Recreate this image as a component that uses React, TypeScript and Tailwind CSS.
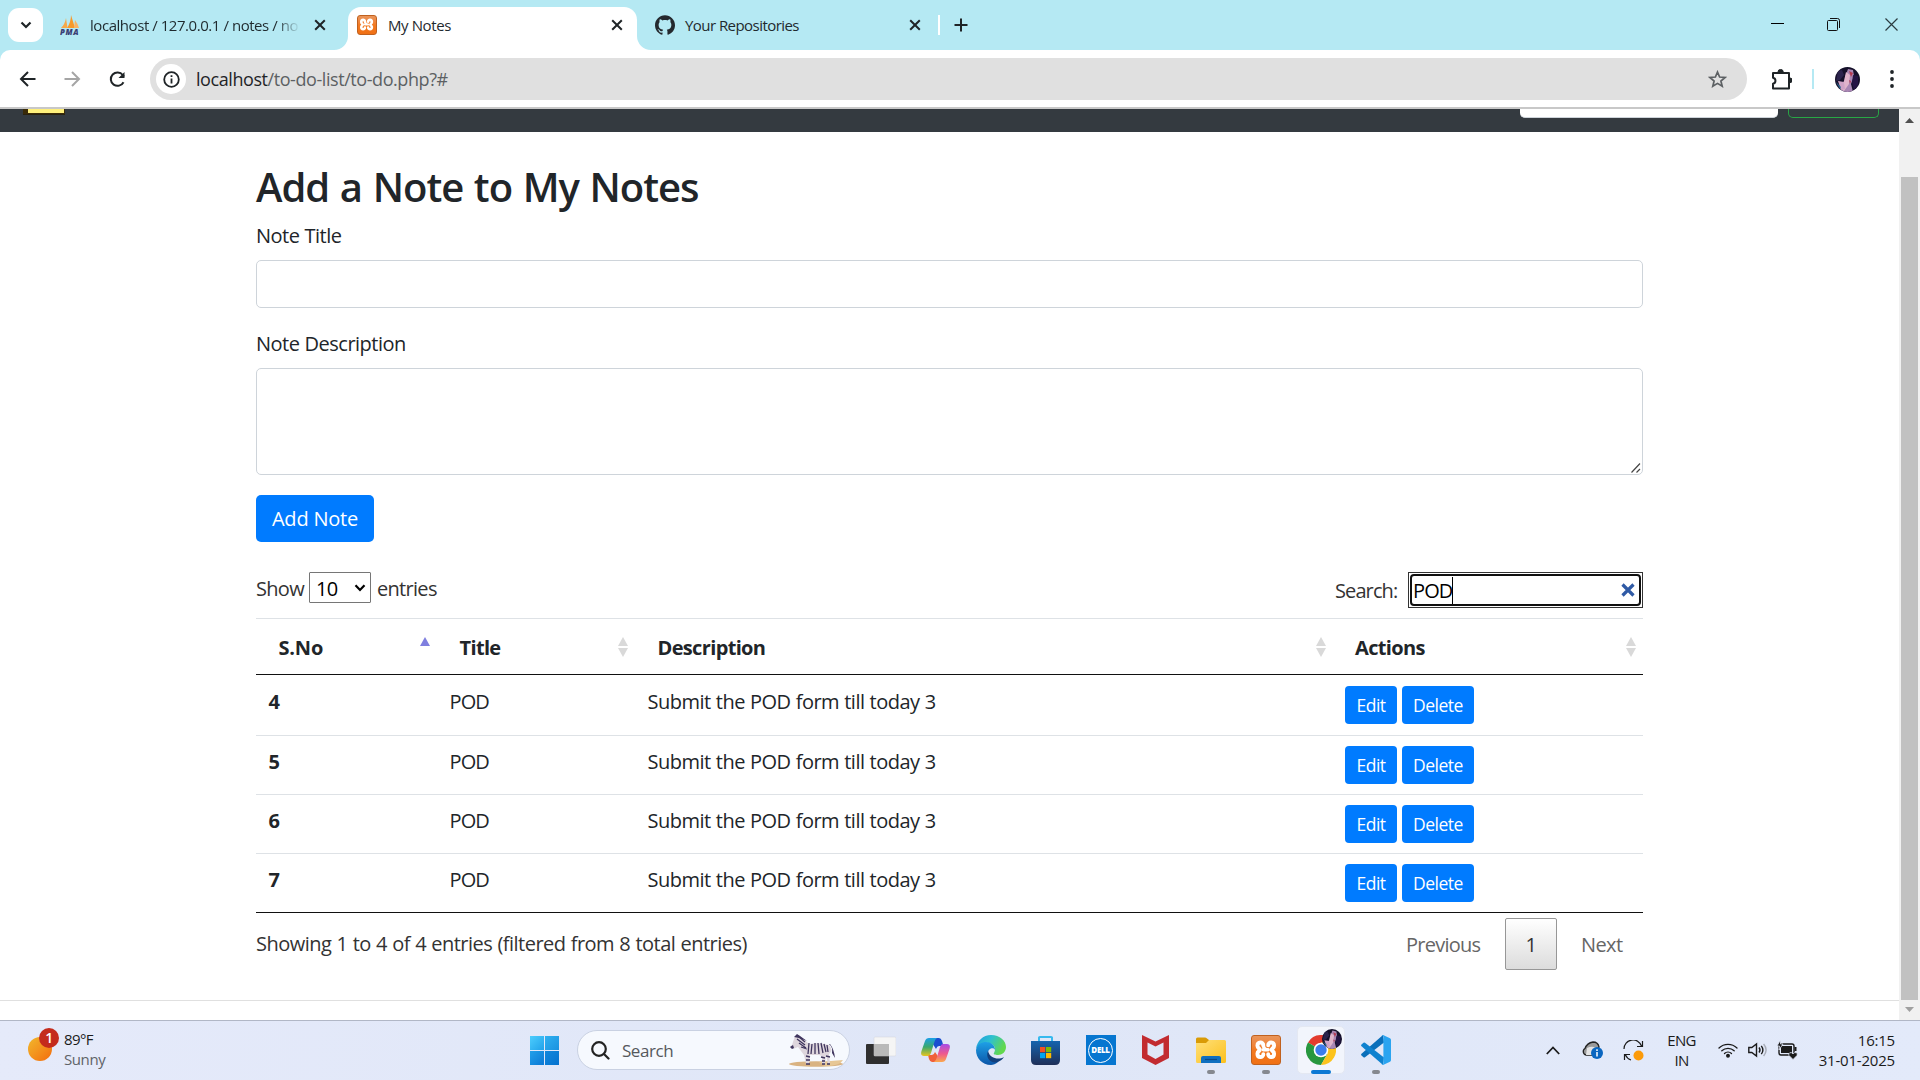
import React from 'react';
import { SiGithub } from 'react-icons/si';

const notes = [
  { id: 4, title: 'POD', text: 'Submit the POD form till today 3', height: 'h-[61px]', pad: 'pt-[11px]' },
  { id: 5, title: 'POD', text: 'Submit the POD form till today 3', height: 'h-[59px]', pad: 'pt-[10px]' },
  { id: 6, title: 'POD', text: 'Submit the POD form till today 3', height: 'h-[59px]', pad: 'pt-[10px]' },
  { id: 7, title: 'POD', text: 'Submit the POD form till today 3', height: 'h-[58px]', pad: 'pt-[10px]' },
];

const columns = 'grid grid-cols-[181px_198px_697.5px_310.5px]';

function CloseX({ className = '' }: { className?: string }) {
  return (
    <svg className={`size-[12px] shrink-0 ${className}`} viewBox="0 0 12 12" fill="none" stroke="#1f2427" strokeWidth="2">
      <path d="M1.2 1.2l9.6 9.6M10.8 1.2l-9.6 9.6" />
    </svg>
  );
}

function Xampp({ className = '' }: { className?: string }) {
  return (
    <span className={`flex shrink-0 items-center justify-center rounded-[3px] border border-[#c0611f] bg-linear-to-b from-[#e9955a] via-[#f37a20] to-[#f07014] ${className}`}>
      <svg className="size-[84%]" viewBox="0 0 24 24" fill="none" stroke="#fff" strokeWidth="4" strokeLinecap="round" strokeLinejoin="round">
        <path d="M9.500 7.500C9.500 3.500 3.500 3.500 3.500 8c0 2.500 2.500 2.500 2.500 4s-2.500 1.500-2.500 4c0 4.500 6 4.500 6 .5" />
        <path d="M14.500 7.500C14.500 3.500 20.500 3.500 20.500 8c0 2.500-2.500 2.500-2.500 4s2.500 1.500 2.500 4c0 4.500-6 4.500-6 .5" />
        <path d="M9.500 7.500Q10 12 14.500 12M9.500 12h5" strokeWidth="3.400" />
      </svg>
    </span>
  );
}

function Avatar({ className = '' }: { className?: string }) {
  return (
    <svg className={`shrink-0 rounded-full ${className}`} viewBox="0 0 25 25">
      <rect width="25" height="25" fill="#15102a" />
      <path d="M3 4l4-1 2 5-4 5-4 1z" fill="#2b234c" />
      <path d="M13 2l5 1 1 6-3 8 2 8H6l3-7 1-8z" fill="#a987b4" />
      <path d="M11 5l4 3-1 9-5 7-4-3 4-7z" fill="#e0b4cb" />
      <path d="M3 14l6 1 1 7-4 1z" fill="#cfa3c6" />
      <path d="M14 4l4 2-2 4zM14 13l2 1-1 3z" fill="#b43a52" />
      <path d="M1 15l5 5-1 2z" fill="#2a6a94" />
      <path d="M18 8l5 1v9l-4 5-2-7z" fill="#241444" />
    </svg>
  );
}

function TabStrip() {
  return (
    <div className="flex h-[50px] shrink-0 bg-[#b5e9f3] text-[15px] tracking-[-0.45px] text-[#1f2a2e]">
      <div className="ml-[8px] mt-[8px] flex h-[34px] w-[35px] items-center justify-center rounded-[11px] bg-white">
        <svg className="size-[12px]" viewBox="0 0 12 12" fill="none" stroke="#1f2427" strokeWidth="2.2">
          <path d="M1.500 3.500L6 8l4.500-4.500" />
        </svg>
      </div>
      <div className="flex h-[50px] w-[305px] items-center pl-[17px]">
        <svg className="size-[20px] shrink-0" viewBox="0 0 20 20">
          <path d="M1 13Q5 9 6 3l1.500 10z" fill="#f6a94a" />
          <path d="M7 13Q11 7 11 0l4 13z" fill="#f8992a" />
          <path d="M14 13l1-8q3 4 4 8z" fill="#f9b465" />
          <text x="0" y="19.500" fontFamily="Open Sans" fontSize="7.800" fontWeight="800" fontStyle="italic" fill="#3b3e73" letterSpacing="0.600">PMA</text>
        </svg>
        <span className="ml-[10px] w-[210px] whitespace-nowrap mask-r-from-[186px] mask-r-to-[210px]">
          localhost / 127.0.0.1 / notes / no
        </span>
        <CloseX className="ml-[14px]" />
      </div>
      <div className="relative mt-[7px] flex h-[43px] w-[289px] items-center rounded-t-[13px] bg-white pb-[7px] pl-[9px]">
        <svg className="absolute bottom-0 -left-[14px] size-[14px]" viewBox="0 0 14 14"><path d="M14 0v14H0A14 14 0 0 0 14 0z" fill="#fff" /></svg>
        <svg className="absolute -right-[14px] bottom-0 size-[14px]" viewBox="0 0 14 14"><path d="M0 0v14h14A14 14 0 0 1 0 0z" fill="#fff" /></svg>
        <Xampp className="size-[20px]" />
        <span className="ml-[11px] w-[223px] tracking-[-0.4px]">My Notes</span>
        <CloseX />
      </div>
      <div className="flex h-[50px] items-center pl-[18px]">
        <SiGithub className="size-[20px] text-[#24292e]" />
        <span className="ml-[10px] w-[224px] tracking-[-0.55px]">Your Repositories</span>
        <CloseX />
        <span className="ml-[17px] h-[20px] w-[2px] bg-white" />
        <svg className="ml-[14px] size-[14px]" viewBox="0 0 14 14" stroke="#1f2427" strokeWidth="2"><path d="M7 .5v13M.5 7h13" /></svg>
      </div>
      <div className="mr-[22px] ml-auto flex h-[49px] items-center">
        <svg className="h-[13px] w-[13px]" viewBox="0 0 13 13" stroke="#000"><path d="M0 5.500h13" /></svg>
        <svg className="ml-[43px] size-[13px]" viewBox="0 0 13 13" fill="none" stroke="#111">
          <rect x=".5" y="2.500" width="10" height="10" rx="1" />
          <path d="M3 .5h7.500a2 2 0 0 1 2 2V10" />
        </svg>
        <svg className="ml-[45px] size-[13px]" viewBox="0 0 13 13" stroke="#2b3c40" strokeWidth="1.200"><path d="M.5.5l12 12M12.500.5l-12 12" /></svg>
      </div>
    </div>
  );
}

function Toolbar() {
  return (
    <div className="h-[59px] shrink-0 bg-[#b5e9f3]">
      <div className="flex h-[59px] items-start rounded-t-[10px] border-b-2 border-[#c8c8c8] bg-white pt-[8px]">
        <div className="flex h-[42px] w-[150px] shrink-0 items-center pl-[19px]">
          <svg className="size-[17px]" viewBox="0 0 17 17" fill="none" stroke="#1f2427" strokeWidth="2"><path d="M16.500 8H2M9 1L2 8l7 7" /></svg>
          <svg className="ml-[28px] size-[17px]" viewBox="0 0 17 17" fill="none" stroke="#a5a5a5" strokeWidth="2"><path d="M.5 8H15M8 1l7 7-7 7" /></svg>
          <svg className="ml-[28px] size-[17px]" viewBox="0 0 17 17" fill="none" stroke="#1f2427" strokeWidth="2"><path d="M14.500 11.200A6.700 6.700 0 1 1 13.800 4L15 5.600" /><path d="M15.500 1v6h-6z" fill="#1f2427" stroke="none" /></svg>
        </div>
        <div className="flex h-[42px] w-[1597px] shrink-0 items-center rounded-full bg-[#e0e0e0] pl-[6px]">
          <span className="flex size-[30px] items-center justify-center rounded-full bg-white">
            <svg className="size-[17px]" viewBox="0 0 17 17" fill="none" stroke="#1f2427" strokeWidth="1.800"><circle cx="8.500" cy="8.500" r="7.300" /><path d="M8.500 7.500v5M8.500 4.300v1.800" /></svg>
          </span>
          <span className="ml-[10px] w-[1512px] text-[18px] tracking-[-0.43px] text-[#5c6063]"><span className="text-[#1f2427]">localhost</span>/to-do-list/to-do.php?#</span>
          <svg className="size-[19px]" viewBox="0 0 19 19" fill="none" stroke="#5c6063" strokeWidth="1.700"><path d="M9.500 2l2.100 5 5.400.5-4.100 3.500 1.300 5.300-4.700-2.900-4.700 2.900L6.100 11 2 7.500 7.400 7z" /></svg>
        </div>
        <div className="flex h-[42px] items-center">
          <svg className="ml-[24px] size-[21px]" viewBox="0 0 21 21">
            <path d="M2 4h16v15.500H2v-4.800a3 3 0 0 0 0-5.900z" fill="none" stroke="#1f2427" strokeWidth="2" strokeLinejoin="round" />
            <path d="M7 3a2.600 2.600 0 0 1 5.200 0zM19 9a2.300 2.300 0 0 1 0 4.600z" fill="#1f2427" stroke="#1f2427" />
          </svg>
          <span className="ml-[20px] h-[20px] w-[2px] bg-[#b5e9f3]" />
          <Avatar className="ml-[21px] size-[25px]" />
          <svg className="ml-[30px] h-[18px] w-[4px]" viewBox="0 0 4 18" fill="#1f2427"><circle cx="2" cy="2" r="1.900" /><circle cx="2" cy="9" r="1.900" /><circle cx="2" cy="16" r="1.900" /></svg>
        </div>
      </div>
    </div>
  );
}

function SortIcon({ active = false }: { active?: boolean }) {
  return (
    <svg className="mt-[18px] mr-[7px] ml-auto h-[20px] w-[10px]" viewBox="0 0 10 20">
      <path d="M5 0l5 9H0z" fill={active ? '#7f7fdf' : '#d9d9d9'} />
      {!active && <path d="M5 20l5-9H0z" fill="#d9d9d9" />}
    </svg>
  );
}

function Page() {
  return (
    <main className="flex min-w-0 flex-1 flex-col bg-white text-[20px] leading-[30px] tracking-[-0.5px] text-[#212529] [word-spacing:0.4px]">
      <div className="flex h-[23px] shrink-0 items-start bg-[#343a40]">
        <div className="ml-[23px] flex h-[6px] w-[42px] border-b border-[#2a2210] bg-[#3a2a08] pl-[5px]">
          <div className="h-[4px] w-[36px] bg-[#fff07c]" />
        </div>
        <div className="ml-[1455px] h-[9px] w-[258px] rounded-b-[5px] border-b border-[#ced4da] bg-white" />
        <div className="ml-[10px] h-[9px] w-[91px] rounded-b-[5px] border border-t-0 border-[#28a745]" />
      </div>
      <div className="mt-[31px] ml-[256px] flex h-[837px] w-[1387px] shrink-0 flex-col">
        <h2 className="h-[58px] text-[40px] leading-[48px] font-semibold tracking-[-1px] [word-spacing:1.2px]">Add a Note to My Notes</h2>
        <label className="h-[39px]">Note Title</label>
        <div className="h-[48px] shrink-0 rounded-[5px] border border-[#ced4da]" />
        <label className="mt-[21px] h-[39px]">Note Description</label>
        <div className="flex h-[107px] shrink-0 items-end justify-end rounded-[5px] border border-[#ced4da] p-[1px]">
          <svg className="size-[10px]" viewBox="0 0 10 10" stroke="#444" strokeWidth="1.200"><path d="M.5 9.500l8.500-9M5.500 9.500L9 6" /></svg>
        </div>
        <button className="mt-[20px] h-[47px] w-[118px] shrink-0 rounded-[5px] bg-[#007bff] tracking-[-0.2px] text-white">Add Note</button>
        <div className="flex h-[76px] shrink-0 items-start pt-[30px] text-[#333]">
          <span className="mt-[2px] w-[53px] tracking-[-0.7px]">Show</span>
          <span className="flex h-[31px] w-[62px] items-center justify-between rounded-[1px] border border-[#767676] pr-[4px] pl-[6px] text-black">
            <span className="mt-[2px] tracking-[-0.8px]">10</span>
            <svg className="size-[12px]" viewBox="0 0 12 12" fill="none" stroke="#000" strokeWidth="2.200"><path d="M1.500 3.200L6 8l4.500-4.800" /></svg>
          </span>
          <span className="mt-[2px] ml-[6px] tracking-[-0.7px]">entries</span>
          <span className="mt-[4px] ml-auto w-[73px] tracking-[-0.9px]">Search:</span>
          <span className="flex h-[36px] w-[235px] border border-[#333] bg-white p-[1px] tracking-[-0.9px] text-black">
            <span className="flex flex-1 items-center rounded-[4px] border-2 border-[#101010] pl-[1px]">
              <span className="mt-[2px]">POD</span>
              <span className="h-[27px] w-px bg-black" />
              <svg className="mr-[4px] ml-auto size-[14px]" viewBox="0 0 14 14" stroke="#2f5aa5" strokeWidth="3.200"><path d="M1.500 1.500l11 11M12.500 1.500l-11 11" /></svg>
            </span>
          </span>
        </div>
        <div className={`${columns} h-[56px] shrink-0 border-t border-[#dee2e6] font-bold tracking-[-0.65px]`}>
          {['S.No', 'Title', 'Description', 'Actions'].map((name, i) => (
            <div key={name} className="flex pl-[22.5px]">
              <span className={i === 0 ? 'mt-[14px] tracking-[-0.2px]' : 'mt-[14px]'}>{name}</span>
              <SortIcon active={i === 0} />
            </div>
          ))}
        </div>
        <div className="shrink-0 border-t border-b border-[#111]">
          {notes.map((n) => (
            <div key={n.id} className={`${columns} ${n.height} ${n.pad} border-b border-[#dee2e6] last:border-b-0`}>
              <span className="mt-px pl-[12.5px] font-bold">{n.id}</span>
              <span className="mt-px pl-[12.5px] tracking-[-0.9px]">{n.title}</span>
              <span className="mt-px pl-[12.5px]">{n.text}</span>
              <span className="flex gap-[5px] pl-[12.5px] text-[17.5px] text-white">
                <button className="h-[38px] w-[52px] rounded-[4px] bg-[#007bff]">Edit</button>
                <button className="h-[38px] w-[72px] rounded-[4px] bg-[#007bff]">Delete</button>
              </span>
            </div>
          ))}
        </div>
        <div className="flex h-[57px] shrink-0 items-start pt-[5px] text-[#333]">
          <span className="mt-[11px] tracking-[-0.53px] [word-spacing:0.6px]">Showing 1 to 4 of 4 entries (filtered from 8 total entries)</span>
          <span className="mt-[12px] ml-auto w-[99px] tracking-[-0.75px] text-[#666]">Previous</span>
          <span className="flex h-[52px] w-[52px] items-center justify-center rounded-[2px] border border-[#979797] bg-linear-to-b from-white to-[#dcdcdc]"><span className="mt-px">1</span></span>
          <span className="mt-[12px] ml-[24px] w-[62px] tracking-[-0.6px] text-[#666]">Next</span>
        </div>
      </div>
      <hr className="border-[#e0e0e0]" />
    </main>
  );
}

function Scrollbar() {
  return (
    <div className="flex w-[21px] shrink-0 flex-col items-center bg-[#f1f1f1]">
      <svg className="h-[68px] w-[9px] shrink-0" viewBox="0 0 9 68"><path d="M4.500 9L9 14H0z" fill="#505050" /></svg>
      <div className="h-[823px] w-[17px] shrink-0 bg-[#c1c1c1]" />
      <svg className="h-[20px] w-[9px] shrink-0" viewBox="0 0 9 20"><path d="M4.500 12L9 7H0z" fill="#a0a0a0" /></svg>
    </div>
  );
}

function Zebra() {
  return (
    <svg className="h-[33px] w-[55px]" viewBox="0 0 55 33">
      <ellipse cx="27" cy="30" rx="27" ry="2.800" fill="#d9b382" />
      <path d="M30 28l24-2q-3 6-18 6z" fill="#e7c795" />
      <path d="M3 11L1 13l3 2 5-2 6 8 2 9h3l1-9h9l3 1v8h3l1-9 2 9h2l-1-10q5-4 0-9-10-3-20-1L10 1 6 2z" fill="#ded6dd" />
      <path d="M9 2l7 6M8 5l8 6M10 9l7 5M12 13l6 2M20 9l-1 11M23 10l-1 10M26 9v11M29 9l1 11M32 9l2 10M35 10l2 8M38 11l1 7M17 22l4 1M17 26h4M32 23l4 1M33 27h3M37 22l4 1" stroke="#3f355e" strokeWidth="1.300" fill="none" />
      <path d="M1 13l3-2 1 3-2 1zM40 10q4 3 3 9l3 5q-1-9-5-14zM5 3l3-3 3 2 7 5-8-3z" fill="#3f355e" />
      <path d="M17 30h4M33 30h3M38 30h3" stroke="#3f355e" strokeWidth="1.500" />
    </svg>
  );
}

function TaskView() {
  return (
    <svg className="h-[29px] w-[30px]" viewBox="0 0 30 29">
      <rect y="8" width="23" height="20" rx="1" fill="#2f2f2f" />
      <rect x="8" y="1" width="22" height="19" rx="1" fill="#f5f5f5" stroke="#d0d3da" strokeWidth=".5" />
      <rect x="8" y="8" width="15" height="12" fill="#b9b9b9" />
    </svg>
  );
}

function Copilot() {
  return (
    <svg className="h-[26px] w-[29px]" viewBox="0 0 29 26">
      <defs>
        <linearGradient id="cpA" x1="0" y1="0" x2="0" y2="1"><stop offset="0" stopColor="#1b9fe8" /><stop offset=".5" stopColor="#3aa86b" /><stop offset="1" stopColor="#e8c520" /></linearGradient>
        <linearGradient id="cpB" x1="0" y1="0" x2="0" y2="1"><stop offset="0" stopColor="#a64be8" /><stop offset=".55" stopColor="#ef5a8c" /><stop offset="1" stopColor="#fba94b" /></linearGradient>
      </defs>
      <path d="M8 1h10q2 0 3 3l1.500 5H18q-2 0-3 3z" fill="#1a4fd0" />
      <path d="M21 25H11q-2 0-3-3l-1-4h4q2 0 3-3z" fill="#f0603a" />
      <path d="M8 1h8q-2 1-3 5l-3 10q-1 3-3 3H3q-4 0-2.500-5L4 4q1-3 4-3z" fill="url(#cpA)" />
      <path d="M21 25h-8q2-1 3-5l3-10q1-3 3-3h4q4 0 2.500 5L25 22q-1 3-4 3z" fill="url(#cpB)" />
    </svg>
  );
}

function Edge() {
  return (
    <svg className="size-[30px]" viewBox="0 0 30 30">
      <defs>
        <linearGradient id="edA" x1="0" y1="0" x2="1" y2=".4"><stop offset="0" stopColor="#1e9be0" /><stop offset=".5" stopColor="#2ec0d0" /><stop offset="1" stopColor="#62d84e" /></linearGradient>
        <linearGradient id="edB" x1="0" y1="0" x2="0" y2="1"><stop offset="0" stopColor="#1ea0e6" /><stop offset="1" stopColor="#0b55a8" /></linearGradient>
      </defs>
      <path d="M0 14C1 6 7 0 15 0c9 0 15 6 15 12 0 5-4 8-8 8-3 0-5-1-4-2 1-2 2-5-1-8-4-4-13-3-17 4z" fill="url(#edA)" />
      <path d="M0 15c1-6 6-8 10-8 5 0 9 3 9 8-1-3-7-2-7 3 0 6 5 9 10 9-2 2-5 3-7 3C6 30 0 23 0 15z" fill="url(#edB)" />
      <path d="M12 16c-3 7 3 13 10 11 2-1 5-3 6-5-5 3-14 2-16-6z" fill="#123f7c" />
    </svg>
  );
}

function Store() {
  return (
    <svg className="h-[30px] w-[29px]" viewBox="0 0 29 30">
      <defs><linearGradient id="stA" x1="0" y1="0" x2="0" y2="1"><stop offset="0" stopColor="#1464ae" /><stop offset="1" stopColor="#1f2f58" /></linearGradient></defs>
      <path d="M8 7V2.500Q8 2 9 2h11q1 0 1 .5V7" fill="none" stroke="#37b9ee" strokeWidth="2" />
      <path d="M0 6h29v19q0 5-5 5H5q-5 0-5-5z" fill="url(#stA)" />
      <path d="M9 12h5.200v5.200H9z" fill="#f25022" /><path d="M15 12h5.200v5.200H15z" fill="#7fba00" />
      <path d="M9 18h5.200v5.200H9z" fill="#00a4ef" /><path d="M15 18h5.200v5.200H15z" fill="#ffb900" />
    </svg>
  );
}

function Dell() {
  return (
    <span className="flex size-[30px] items-center justify-center bg-[#0676d0]">
      <span className="flex size-[25px] items-center justify-center rounded-full border border-white text-[8px] leading-none font-extrabold tracking-[-0.3px] text-white">DELL</span>
    </span>
  );
}

function McAfee() {
  return (
    <svg className="h-[30px] w-[27px]" viewBox="0 0 27 30">
      <path d="M0 0l13.500 6.500L27 0v23l-13.500 7L0 23zM5.500 7.500v12l8 4.500 8-4.500v-12l-8 4z" fill="#c22b30" fillRule="evenodd" />
    </svg>
  );
}

function Explorer() {
  return (
    <svg className="h-[27px] w-[30px]" viewBox="0 0 30 27">
      <defs><linearGradient id="exA" x1="0" y1="0" x2="1" y2="1"><stop offset="0" stopColor="#ffe07a" /><stop offset="1" stopColor="#fcc01c" /></linearGradient></defs>
      <path d="M0 2q0-1.500 1.500-1.500H9q1 0 2 1L13 3v6H0z" fill="#d99b06" />
      <path d="M0 6h10l3-3h15.500Q30 3 30 4.500v20q0 1.500-1.500 1.500h-27Q0 26 0 24.500z" fill="url(#exA)" />
      <path d="M5 26v-5q0-2 2-2h16q2 0 2 2v5z" fill="#0f6fc0" /><path d="M9 22.500h12" stroke="#0a4a88" strokeWidth="1.200" />
    </svg>
  );
}

function Chrome() {
  return (
    <svg className="size-[30px]" viewBox="0 0 30 30">
      <path d="M15 15L2 7.500A15 15 0 0 1 28 7.500H15z" fill="#e33b2e" />
      <path d="M15 15L2 7.500A15 15 0 0 0 15 30l6.500-11.200z" fill="#27973f" />
      <path d="M15 7.500h13A15 15 0 0 1 15 30l6.500-11.200z" fill="#fcc31c" />
      <circle cx="15" cy="15" r="7.300" fill="#fff" /><circle cx="15" cy="15" r="5.700" fill="#3b7ded" />
    </svg>
  );
}

function VsCode() {
  return (
    <svg className="size-[30px]" viewBox="0 0 30 30">
      <path d="M22 0l1 7.500L4 22.300q-.8.600-1.500 0L.5 20.500q-.9-.9 0-1.700z" fill="#0a6fba" />
      <path d="M22 30l1-7.500L4 7.700q-.8-.6-1.500 0L.5 9.500q-.9.900 0 1.700z" fill="#0f82cf" />
      <path d="M22 0l7 3.300q1 .5 1 1.700v20q0 1.200-1 1.700L22 30q-1 .2-1.500-.6 1.900 1 1.900-1.500V2Q22.400 0 20.500.6 21-.1 22 0z" fill="#2aa4f0" />
    </svg>
  );
}

const apps: { icon: React.ReactNode; open?: boolean; active?: boolean }[] = [
  { icon: <TaskView /> },
  { icon: <Copilot /> },
  { icon: <Edge /> },
  { icon: <Store /> },
  { icon: <Dell /> },
  { icon: <McAfee /> },
  { icon: <Explorer />, open: true },
  { icon: <Xampp className="size-[30px]" />, open: true },
  { icon: <Chrome />, active: true },
  { icon: <VsCode />, open: true },
];

function Taskbar() {
  return (
    <footer className="flex h-[60px] shrink-0 border-t border-[#b1b7c6] bg-linear-to-r from-[#e5eafa] via-[#dfe6f7] to-[#e3eafa] text-[15px] leading-[20px] tracking-[-0.4px] text-[#1b1b1b]">
      <div className="flex w-[530px] shrink-0 pl-[28px]">
        <div className="relative mt-[16px] size-[24px] rounded-full bg-linear-to-br from-[#f0b82c] to-[#f26a0c]">
          <span className="absolute -top-[9px] left-[11px] flex size-[20px] items-center justify-center rounded-full bg-[#c42b1c] text-[14px] font-semibold text-white">1</span>
        </div>
        <div className="mt-[8px] ml-[12px]">
          <div className="tracking-[-0.6px]">89°F</div>
          <div className="text-[#5f6368]">Sunny</div>
        </div>
      </div>
      <div className="mt-[15px] grid size-[29px] shrink-0 grid-cols-2 gap-px">
        <span className="bg-linear-to-br from-[#4ccdfd] to-[#1fa2ea]" /><span className="bg-linear-to-br from-[#2fb0f0] to-[#1a92e0]" />
        <span className="bg-linear-to-br from-[#22a0ea] to-[#0c78d4]" /><span className="bg-linear-to-br from-[#1288dc] to-[#0672cf]" />
      </div>
      <div className="mt-[9px] ml-[18px] flex h-[40px] w-[273px] shrink-0 items-center rounded-full border border-[#c9d1e2] bg-[#f6f9fe] pl-[13px]">
        <svg className="size-[19px]" viewBox="0 0 19 19" fill="none" stroke="#222" strokeWidth="2.200" strokeLinecap="round"><circle cx="8" cy="8" r="6.800" /><path d="M13 13l4.500 4.500" /></svg>
        <span className="mt-px ml-[12px] w-[167px] text-[17px] tracking-[-0.45px] text-[#55585c]">Search</span>
        <Zebra />
      </div>
      <div className="ml-[3px] flex shrink-0">
        {apps.map((app, i) => (
          <div key={i} className="relative flex h-[58px] w-[55px] items-center justify-center">
            {app.active && <span className="absolute top-[5px] left-[4px] h-[48px] w-[48px] rounded-[5px] border border-[#e4e8f2] bg-[#f2f5fc]" />}
            <span className="relative">{app.icon}</span>
            {app.active && <Avatar className="absolute top-[8px] left-[29px] size-[20px]" />}
            {app.open && <span className="absolute top-[49px] h-[4px] w-[8px] rounded-full bg-[#85888f]" />}
            {app.active && <span className="absolute top-[49px] left-[18px] h-[4px] w-[20px] rounded-full bg-[#0b78d4]" />}
          </div>
        ))}
      </div>
      <div className="mr-[25px] ml-auto flex h-[58px] items-center">
        <svg className="h-[9px] w-[14px]" viewBox="0 0 14 9" fill="none" stroke="#1b1b1b" strokeWidth="1.800"><path d="M.8 8L7 1.500 13.200 8" /></svg>
        <svg className="ml-[22px] h-[18px] w-[21px]" viewBox="0 0 21 18">
          <path d="M5 14H4.500A3.500 3.500 0 0 1 3 7.500Q5 2 11 1q5 0 6 5l-6 8z" fill="#9a9a9a" stroke="#222" strokeWidth="1.300" />
          <path d="M5 7q6-3 11 1l-6 6H4z" fill="#e4e4e4" />
          <circle cx="15" cy="12" r="6" fill="#0a66c0" /><path d="M15 11v4.500M15 8.300v1.600" stroke="#fff" strokeWidth="1.500" />
        </svg>
        <svg className="ml-[20px] size-[21px]" viewBox="0 0 21 21">
          <path d="M1 9a9 9 0 0 1 17.500-3M19.500 1v5.500H14M8 20A9 9 0 0 1 2.500 15M1.500 20v-5.500H7" fill="none" stroke="#1b1b1b" strokeWidth="1.200" />
          <circle cx="15.500" cy="15.500" r="5" fill="#fb9a09" />
        </svg>
        <div className="ml-[23px] w-[29px] text-center tracking-[-0.7px]"><div>ENG</div><div>IN</div></div>
        <svg className="ml-[22px] h-[16px] w-[20px]" viewBox="0 0 20 16" fill="none" stroke="#1b1b1b" strokeWidth="1.300" strokeLinecap="round"><path d="M1 6a13 13 0 0 1 18 0M3.800 8.800a9 9 0 0 1 12.400 0M6.500 11.500a5 5 0 0 1 7 0" /><circle cx="10" cy="13.800" r="1.300" fill="#1b1b1b" /></svg>
        <svg className="ml-[10px] h-[16px] w-[20px]" viewBox="0 0 20 16" fill="none" stroke="#1b1b1b" strokeWidth="1.400"><path d="M.8 5.500v5h3L8.500 14V2L3.800 5.500zM11 5.500q2 2.500 0 5M13.300 3.800q3.200 4.200 0 8.400" /><path d="M15.600 2q5 6 0 12" stroke="#a9adb8" /></svg>
        <svg className="ml-[9px] h-[20px] w-[21px]" viewBox="0 0 21 20">
          <rect x="2" y="4" width="15" height="11" rx="2" fill="none" stroke="#1b1b1b" strokeWidth="1.400" /><rect x="4" y="6" width="11" height="7" fill="#1b1b1b" /><path d="M18.500 7v4" stroke="#1b1b1b" strokeWidth="2" />
          <path d="M3.500 0L0 6h2.500l-.5 4 4-6H3.500z" fill="#1b1b1b" stroke="#e2e9f9" strokeWidth=".8" />
          <path d="M16 19.500l-4-4q-1-2 .8-2.800 2-.6 3.200 1.200 1.200-1.800 3.200-1.200 1.800.8.800 2.800z" fill="#1b1b1b" stroke="#e2e9f9" strokeWidth=".8" />
        </svg>
        <div className="ml-[20px] w-[77px] text-right tracking-[-0.2px]"><div>16:15</div><div>31-01-2025</div></div>
      </div>
    </footer>
  );
}

export default function App() {
  return (
    <div className="flex h-[1080px] w-[1920px] flex-col overflow-hidden bg-white font-['Open_Sans',sans-serif]">
      <TabStrip />
      <Toolbar />
      <div className="flex h-[911px] shrink-0 overflow-hidden">
        <Page />
        <Scrollbar />
      </div>
      <Taskbar />
    </div>
  );
}
